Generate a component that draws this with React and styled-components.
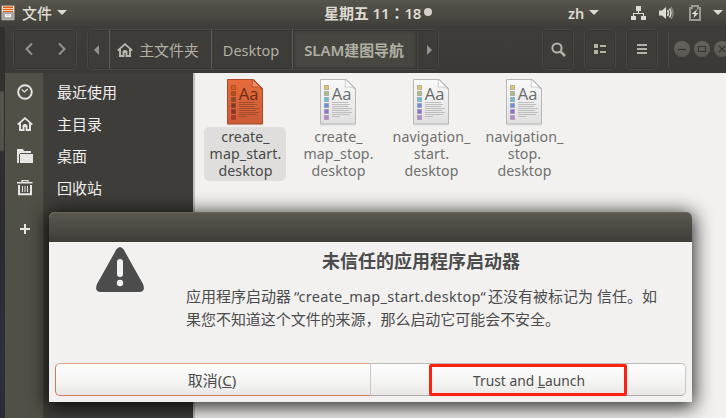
import React from "react";
import styled, { createGlobalStyle } from "styled-components";

const Global = createGlobalStyle`
  * { box-sizing: border-box; }
  body { margin: 0; overflow: hidden; background: #f2f1f0; }
  button { font: inherit; color: inherit; background: none; border: 0; padding: 0; margin: 0; }
`;

const Desktop = styled.div`
  position: relative;
  width: 726px;
  height: 418px;
  overflow: hidden;
  display: flex;
  flex-direction: column;
  font-family: "Noto Sans", "Noto Sans CJK SC", sans-serif;
  font-size: 15px;
  color: #4c4c4c;
  white-space: nowrap;
`;

const Text = styled.span`
  font-size: ${(p) => p.$size || 15}px;
  font-weight: ${(p) => p.$weight || 400};
  letter-spacing: ${(p) => p.$track || 0}px;
  line-height: 20px;
`;

/* ---- System bar ---- */
const SystemBar = styled.header`
  height: 27px;
  flex: none;
  display: grid;
  grid-template-columns: 324px 244px 1fr;
  align-items: center;
  background: linear-gradient(#57554c, #403f3a 95%, #3b3a36);
  color: #dfdbd2;
  padding-bottom: 1px;
`;
const BarGroup = styled.div`
  display: flex;
  align-items: center;
  height: 26px;
`;
const AppMenu = styled(BarGroup)`
  gap: 7px;
  padding-left: 1px;
`;
const Clock = styled(BarGroup)`
  gap: 3px;
`;
const Colon = styled.span`
  font-family: "Noto Sans CJK TC", sans-serif;
`;
const Dot = styled.i`
  width: 8px;
  height: 8px;
  margin-top: -2px;
  border-radius: 50%;
  background: #d5d1ca;
`;
const Caret = styled.i`
  border: 5px solid transparent;
  border-top-color: #dfdbd2;
  border-bottom: 0;
  margin-top: -1px;
  margin-left: ${(p) => p.$gap || 0}px;
`;

/* ---- Window ---- */
const Main = styled.div`
  flex: 1;
  display: grid;
  grid-template-columns: 5px 1fr;
  min-height: 0;
`;
const Wallpaper = styled.div`
  background: linear-gradient(#302f2e, #343331 64px, #555450 65px, #51504c 123px, #302f30 125px, #292a30 220px, #2d3043 340px, #292a36);
  border-right: 1px solid #2f2f2d;
`;
const Window = styled.div`
  display: flex;
  flex-direction: column;
  min-width: 0;
`;
const HeaderBar = styled.div`
  height: 46px;
  flex: none;
  display: flex;
  padding: 2px 0 3px 8px;
  background: linear-gradient(#3e3d39, #3a3935);
  color: #b2afa5;
  overflow: hidden;
`;
const Segment = styled.div`
  height: 41px;
  flex: none;
  display: flex;
  align-items: stretch;
  border: 1px solid #484742;
  border-radius: 5px;
  background: #3d3c38;
  box-shadow: inset 0 0 0 1px #373632;
  overflow: hidden;
`;
const NavButtons = styled(Segment)`
  width: 64px;
  margin-right: 10px;
  justify-content: space-between;
  padding: 0 10px 0 11px;
`;
const PathBar = styled(Segment)`
  width: 352px;
  margin-right: 103px;
`;
const Crumb = styled.button`
  width: ${(p) => p.$w}px;
  flex: none;
  display: flex;
  align-items: center;
  justify-content: center;
  gap: 6px;
  padding-right: ${(p) => p.$inset ?? 2}px;
  border-right: 1px solid ${(p) => (p.$last ? "#45443f" : "#5c5b56")};
  background: ${(p) => (p.$active ? "#474640" : "transparent")};
  box-shadow: ${(p) => (p.$active ? "inset 0 0 3px 1px #33322f" : "none")};
`;
const CrumbArrow = styled.button`
  width: ${(p) => p.$w}px;
  display: flex;
  align-items: center;
  justify-content: center;
  padding: ${(p) => (p.$divided ? "0 4px 0 0" : "0 0 0 3px")};
  border-right: ${(p) => (p.$divided ? "1px solid #5c5b56" : "0")};
`;
const ToolButton = styled(Segment)`
  width: 32px;
  margin-right: 10px;
  padding-bottom: 1px;
  align-items: center;
  justify-content: center;
`;
const WindowControls = styled.div`
  display: flex;
  align-items: center;
  flex: none;
  gap: 4px;
  height: 35px;
  margin-top: 3px;
  padding: 0 0 1px 5px;
  border-left: 1px solid #4a4944;
`;
const WindowButton = styled.button`
  width: 16px;
  height: 16px;
  border-radius: 50%;
  background: linear-gradient(#66645d, #595851);
  display: flex;
  align-items: center;
  justify-content: center;
`;

const Body = styled.div`
  flex: 1;
  display: grid;
  grid-template-columns: 39px 149px 1fr;
  min-height: 0;
`;
const IconRail = styled.div`
  background: #505046;
  border-right: 1px solid #45443e;
  display: flex;
  flex-direction: column;
  align-items: center;
  padding: 3px 0 0 2px;
  color: #e7e6e3;
`;
const RailItem = styled.div`
  height: ${(p) => p.$h || 32}px;
  display: flex;
  align-items: center;
`;
const Places = styled.div`
  background: #3e3d39;
  color: #f0efed;
  padding: 3px 0 0 13px;
`;
const Place = styled.div`
  height: 32px;
  display: flex;
  align-items: center;
`;
const Files = styled.div`
  background: #f2f1f0;
  border-left: 2px solid #c0bfbd;
  display: flex;
  gap: 11px;
  padding: 5px 0 0 9px;
`;
const File = styled.div`
  width: 82px;
  flex: none;
  display: flex;
  flex-direction: column;
  align-items: center;
`;
const FileName = styled.div`
  width: 82px;
  height: 54px;
  margin-top: 1px;
  padding: 1px 0 0 1px;
  border-radius: 5px;
  text-align: center;
  font-size: 14.2px;
  letter-spacing: 0.1px;
  line-height: 17px;
  color: ${(p) => (p.$selected ? "#484846" : "#70706d")};
  background: ${(p) => (p.$selected ? "#dfdedc" : "transparent")};
`;

/* ---- Dialog ---- */
const Dialog = styled.section`
  position: absolute;
  left: 49px;
  top: 212px;
  width: 643px;
  height: 190px;
  border-radius: 6px 6px 0 0;
  background: #f2f1f0;
  box-shadow: 0 3px 19px 2px rgba(0, 0, 0, 0.85);
  display: flex;
  flex-direction: column;
`;
const DialogTitleBar = styled.div`
  height: 30px;
  flex: none;
  border-radius: 6px 6px 0 0;
  background: linear-gradient(#5b594f, #3e3d38);
  box-shadow: inset 0 1px #68665c;
`;
const DialogBody = styled.div`
  height: 121px;
  display: grid;
  grid-template-columns: 90px 1fr;
  padding: 5px 0 0 47px;
`;
const Message = styled.div`
  display: flex;
  flex-direction: column;
`;
const Heading = styled.h1`
  width: 470px;
  margin: 1px 0 11px;
  text-align: center;
  font-size: 18px;
  line-height: 26px;
  font-weight: 700;
`;
const Line = styled.p`
  margin: 0;
  height: 23px;
  line-height: 23px;
  letter-spacing: -0.04px;
  display: flex;
`;
const Phrase = styled(Text)`
  width: ${(p) => (p.$w ? p.$w + "px" : "auto")};
  line-height: 23px;
`;
const Actions = styled.div`
  margin: 0 6px;
  height: 33px;
  display: grid;
  grid-template-columns: 316px 1fr;
`;
const Action = styled.button`
  border: 1px solid ${(p) => (p.$focus ? "#d0785c" : "#a9a8a6")};
  border-top-color: ${(p) => (p.$focus ? "#dda08c" : "#bab9b6")};
  border-right-color: #c8c7c5;
  border-radius: ${(p) => (p.$focus ? "5px 0 0 5px" : "0 5px 5px 0")};
  border-left-width: ${(p) => (p.$focus ? 1 : 0)}px;
  background: linear-gradient(#fefefe, #f6f6f5 50%, #e9e8e7);
  padding: 1px ${(p) => (p.$focus ? 2 : 0)}px 0 ${(p) => (p.$focus ? 0 : 2)}px;
`;
const Highlight = styled.div`
  position: absolute;
  left: 380px;
  top: 152px;
  width: 198px;
  height: 32px;
  border: 3px solid #fc2110;
  border-radius: 2px;
`;

const AppIcon = () => (
  <svg width="14" height="16" viewBox="0 0 14 16">
    <rect x=".5" y=".5" width="13" height="14.5" rx="1" fill="#ddd" stroke="#888179" />
    <path d="M2 1.5h10v6H2z" fill="#e85d12" /><path d="M2 3.5h10M2 5.5h10" stroke="#ffd2a1" />
    <path d="M1 7h12v7H1z" fill="#aaa9a5" />
    <path d="M4.5 9v2.5h5V9" fill="#ddd" stroke="#f9f9f9" />
  </svg>
);
const Network = () => (
  <svg width="16" height="16" viewBox="0 0 16 16" fill="#dfdbd2">
    <path d="M5 1h5v5H5zM0 11h5v4H0zM10 11h5v4h-5zM7 6h1v2H7zM2 8h11v1H2zM2 8h1v3H2zM12 8h1v3h-1z" />
  </svg>
);
const Volume = () => (
  <svg width="16" height="14" viewBox="0 0 16 14" fill="none">
    <path d="M0 4.5h3L7 1v12L3 9.5H0z" fill="#dfdbd2" />
    <path d="M8.5 4q2 3 0 6M10.5 2.5q3 4.5 0 9" stroke="#dfdbd2" strokeWidth="1.5" />
    <path d="M12 1q4 6 0 12" stroke="#888279" strokeWidth="1.5" />
  </svg>
);
const Battery = () => (
  <svg width="12" height="16" viewBox="0 0 12 16">
    <path d="M1 3h2V1h6v2h2v12H1z" fill="none" stroke="#9e9a91" strokeWidth="2" />
    <path d="M8.5 4L2.5 9h3l-1 4 5-5h-3z" fill="#dfdbd2" />
  </svg>
);
const Chevron = ({ right }) => (
  <svg width="8" height="41" viewBox="0 0 8 41" fill="none" stroke="#94928b" strokeWidth="2">
    <path d={right ? "M1 13.5l5.5 5.5L1 24.5" : "M7 13.5l-5.5 5.5L7 24.5"} />
  </svg>
);
const Triangle = ({ right }) => (
  <svg width="5" height="10" viewBox="0 0 5 10"><path d={right ? "M0 0l5 5-5 5z" : "M5 0L0 5l5 5z"} fill="#94928b" /></svg>
);
const Home = ({ color = "#bcb9af" }) => (
  <svg width="16" height="14" viewBox="0 0 16 14" fill="none" stroke={color}>
    <path d="M.7 7.7L8 1.2l7.3 6.5" strokeWidth="1.8" />
    <path d="M3 6v7h3.5V9h3v4H13V6" strokeWidth="1.9" />
    <path d="M8 7v2" strokeWidth="3" />
  </svg>
);
const Search = () => (
  <svg width="15" height="15" viewBox="0 0 15 15" fill="none" stroke="#b5b3a8">
    <circle cx="6" cy="6" r="4.6" strokeWidth="2" /><path d="M9.2 9.2l4.8 4.8" strokeWidth="2.5" />
  </svg>
);
const ListView = () => (
  <svg width="12" height="10" viewBox="0 0 12 10" fill="#b5b3a8"><path d="M0 0h4v4H0zM0 6h4v4H0zM6 1h6v2H6zM6 7h6v2H6z" /></svg>
);
const Menu = () => (
  <svg width="10" height="10" viewBox="0 0 10 10" fill="#b5b3a8"><path d="M0 0h10v2H0zM0 4h10v2H0zM0 8h10v2H0z" /></svg>
);
const WindowGlyph = ({ d }) => (
  <svg width="16" height="16" viewBox="0 0 16 16" fill="none" stroke="#35342f" strokeWidth="1.2"><path d={d} /></svg>
);
const Recent = () => (
  <svg width="16" height="16" viewBox="0 0 16 16" fill="none" stroke="currentColor">
    <circle cx="8" cy="8" r="6.8" strokeWidth="1.9" /><path d="M4.7 5.3L7.3 8l3.5-3" strokeWidth="1.2" />
  </svg>
);
const Folder = () => (
  <svg width="16" height="16" viewBox="0 0 16 16" fill="currentColor">
    <path d="M0 1h6l1 2h7v2H3.5L2 6.5V15H0zM3 6h13v9H3z" />
  </svg>
);
const Trash = () => (
  <svg width="16" height="16" viewBox="0 0 16 16" fill="none" stroke="currentColor">
    <path d="M0 2.7h15.5" strokeWidth="1.6" /><path d="M5 2V.7h6V2" strokeWidth="1.2" />
    <path d="M2 5v9.2h12V5" strokeWidth="2" /><path d="M5.5 6v6M8 6v6M10.5 6v6" />
  </svg>
);
const Plus = () => (
  <svg width="10" height="10" viewBox="0 0 10 10" fill="currentColor"><path d="M4 0h2v4h4v2H6v4H4V6H0V4h4z" /></svg>
);
const Doc = styled.svg`
  display: block;
  font-family: "Open Sans", "Noto Sans", sans-serif;
`;
const DocumentIcon = ({ selected }) => {
  const swatches = selected
    ? ["#e05e10", "#b25018", "#805030", "#7a3832", "#8b2f2b", "#b8332f"]
    : ["#e3c65e", "#a9bd83", "#66bed7", "#6b8ce0", "#8b70d6", "#b886cc"];
  const edge = selected ? "#ae4826" : "#b7b7b7";
  const id = selected ? "docOn" : "docOff";
  return (
    <Doc width="38" height="48" viewBox="0 0 38 48">
      <defs>
        <linearGradient id={id} x2="0" y2="1">
          <stop stopColor={selected ? "#e86b3b" : "#fafafa"} />
          <stop offset="1" stopColor={selected ? "#cb5c37" : "#dfdfdf"} />
        </linearGradient>
      </defs>
      <path d="M1 47h36" stroke="#dddcda" />
      <path d="M1.5 1.5h26l9 9v35.5h-35z" fill={`url(#${id})`} stroke={edge} />
      <path d="M26 2q1 1 0 7 7-1 10 2L27 2z" fill={selected ? "#ef9067" : "#fff"} stroke={edge} strokeWidth=".7" />
      {swatches.map((c, i) => (
        <rect key={c} x="5.5" y={7.5 + i * 6} width="4" height="4" fill={c} stroke={selected ? "#8b4221" : "#918e92"} strokeOpacity=".55" />
      ))}
      <text x="12.8" y="22" fontSize="16.5" fill={selected ? "#6b2d1a" : "#6a6a6a"}>Aa</text>
      <path d="M13 24.5h16M13 26.5h18M13 28.5h16M13 30.5h20M13 32.5h17M13 34.5h20M13 36.5h18M13 38.5h8" stroke={selected ? "#a54c2c" : "#bebebe"} />
    </Doc>
  );
};
const Warning = () => (
  <svg width="50" height="48" viewBox="0 0 50 48">
    <path d="M20.3 2.6q3.7-5 7.4 0L47 37q3 8-4 8H5q-7 0-4-8z" fill="#4c4c4c" />
    <rect x="21" y="12" width="6" height="18" rx="3" fill="#f2f1f0" /><circle cx="24" cy="36" r="3.2" fill="#f2f1f0" />
  </svg>
);

const FILES = [
  { lines: ["create_", "map_start.", "desktop"], selected: true },
  { lines: ["create_", "map_stop.", "desktop"] },
  { lines: ["navigation_", "start.", "desktop"] },
  { lines: ["navigation_", "stop.", "desktop"] },
];
const PLACES = ["最近使用", "主目录", "桌面", "回收站"];

const StatusArea = styled(BarGroup)`
  & > svg:nth-of-type(1) { margin-left: 32px; }
  & > svg:nth-of-type(2) { margin-left: 12px; }
  & > svg:nth-of-type(3) { margin-left: 14px; }
`;

export default function App() {
  return (
    <Desktop>
      <Global />
      <SystemBar>
        <AppMenu>
          <AppIcon />
          <Text $weight={500}>文件</Text>
          <Caret $gap={-2} />
        </AppMenu>
        <Clock>
          <Text $weight={600} $track={-0.1}>星期五 11<Colon>：</Colon>18</Text>
          <Dot />
        </Clock>
        <StatusArea>
          <Text $weight={600} $size={14.5}>zh</Text>
          <Caret $gap={5} />
          <Network />
          <Volume />
          <Battery />
          <Caret $gap={12} />
        </StatusArea>
      </SystemBar>
      <Main>
        <Wallpaper />
        <Window>
          <HeaderBar>
            <NavButtons><Chevron /><Chevron right /></NavButtons>
            <PathBar>
              <CrumbArrow $w={22} $divided><Triangle /></CrumbArrow>
              <Crumb $w={102} $inset={5}><Home /><Text $track={-0.1}>主文件夹</Text></Crumb>
              <Crumb $w={81}><Text $size={14.5}>Desktop</Text></Crumb>
              <Crumb $w={125} $active $last><Text $weight={600} $size={14.9}>SLAM建图导航</Text></Crumb>
              <CrumbArrow $w={20}><Triangle right /></CrumbArrow>
            </PathBar>
            <ToolButton><Search /></ToolButton>
            <ToolButton><ListView /></ToolButton>
            <ToolButton><Menu /></ToolButton>
            <WindowControls>
              <WindowButton><WindowGlyph d="M4 8.5h8" /></WindowButton>
              <WindowButton><WindowGlyph d="M4.5 5.5h7v5h-7z" /></WindowButton>
              <WindowButton><WindowGlyph d="M5 5l6 6M11 5l-6 6" /></WindowButton>
            </WindowControls>
          </HeaderBar>
          <Body>
            <IconRail>
              <RailItem><Recent /></RailItem>
              <RailItem><Home color="#e7e6e3" /></RailItem>
              <RailItem><Folder /></RailItem>
              <RailItem><Trash /></RailItem>
              <RailItem $h={50}><Plus /></RailItem>
            </IconRail>
            <Places>
              {PLACES.map((name) => <Place key={name}><Text>{name}</Text></Place>)}
            </Places>
            <Files>
              {FILES.map((file) => (
                <File key={file.lines.join("")}>
                  <DocumentIcon selected={file.selected} />
                  <FileName $selected={file.selected}>
                    {file.lines.map((line) => <div key={line}>{line}</div>)}
                  </FileName>
                </File>
              ))}
            </Files>
          </Body>
        </Window>
      </Main>
      <Dialog>
        <DialogTitleBar />
        <DialogBody>
          <Warning />
          <Message>
            <Heading>未信任的应用程序启动器</Heading>
            <Line>
              <Phrase $w={108}>应用程序启动器</Phrase>
              <Phrase $w={194} $size={14.5} $track={0.25}>“create_map_start.desktop“</Phrase>
              <Phrase>还没有被标记为 信任。如</Phrase>
            </Line>
            <Line>果您不知道这个文件的来源，那么启动它可能会不安全。</Line>
          </Message>
        </DialogBody>
        <Actions>
          <Action $focus><Text>取消(<u>C</u>)</Text></Action>
          <Action><Text $size={13.8}>Trust and <u>L</u>aunch</Text></Action>
        </Actions>
        <Highlight />
      </Dialog>
    </Desktop>
  );
}
